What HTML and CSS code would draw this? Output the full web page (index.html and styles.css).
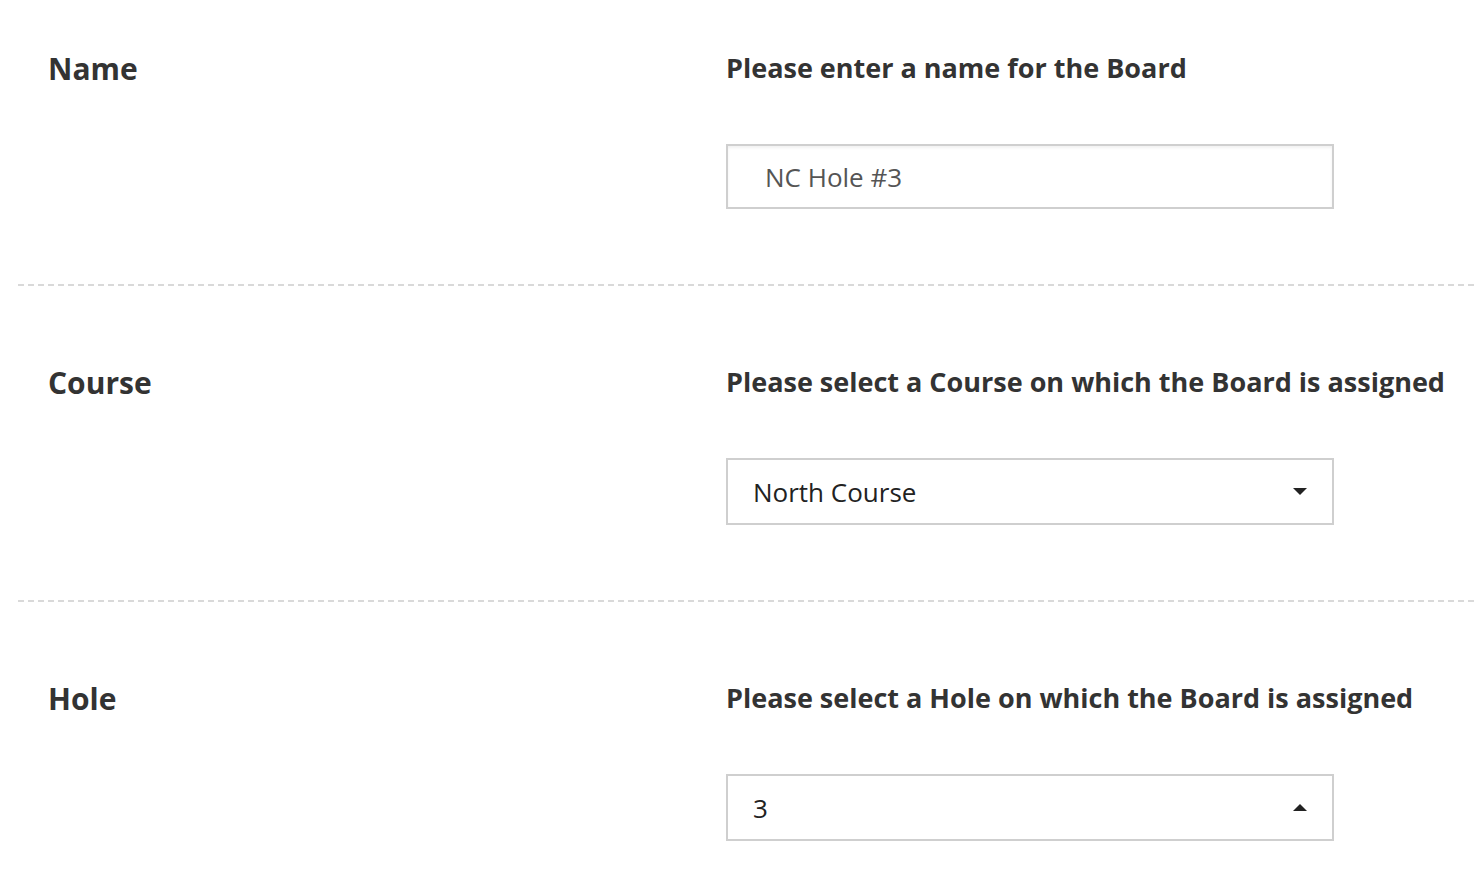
FILE: index.html
```html
<!DOCTYPE html>
<html lang="en">
<head>
<meta charset="UTF-8">
<meta name="viewport" content="width=device-width, initial-scale=1.0">
<title>Board</title>
<link rel="stylesheet" href="styles.css">
</head>
<body>

<!-- Board settings form -->
<form class="board-form">
    <div class="form-row">
        <label class="row-label" for="boardName">Name</label>
        <div class="row-field">
            <p class="row-help">Please enter a name for the Board</p>
            <input type="text" id="boardName" class="text-input" value="NC Hole #3">
        </div>
    </div>

    <div class="form-row">
        <label class="row-label" for="boardCourse">Course</label>
        <div class="row-field">
            <p class="row-help">Please select a Course on which the Board is assigned</p>
            <div class="select-box" id="boardCourse">
                <span>North Course</span>
                <span class="caret caret-down"></span>
            </div>
        </div>
    </div>

    <div class="form-row">
        <label class="row-label" for="boardHole">Hole</label>
        <div class="row-field">
            <p class="row-help">Please select a Hole on which the Board is assigned</p>
            <div class="select-box" id="boardHole">
                <span>3</span>
                <span class="caret caret-up"></span>
            </div>
        </div>
    </div>
</form>

</body>
</html>
```

FILE: styles.css
```css
body {
    margin: 0;
    background: #fff;
    font-family: "Open Sans", "Lato", sans-serif;
    color: #333;
}

/* Filas del formulario */
.board-form {
    padding-left: 18px;
}

.form-row {
    display: grid;
    grid-template-columns: 708px 1fr;
    padding: 80px 0 77px 0;
    background-image: repeating-linear-gradient(to right, #d9d9d9 0, #d9d9d9 6px, transparent 6px, transparent 10px);
    background-size: 100% 2px;
    background-repeat: no-repeat;
    background-position: left bottom;
}

.form-row:first-child {
    padding-top: 52px;
}

.form-row:last-child {
    background-image: none;
}

.row-label {
    padding-left: 30px;
    font-size: 30px;
    font-weight: 700;
    line-height: 34px;
    color: #333;
}

.row-help {
    margin: 0 0 60px 0;
    font-size: 27px;
    font-weight: 700;
    line-height: 32px;
    color: #333;
    white-space: nowrap;
}

/* Campo de texto */
.text-input {
    display: block;
    box-sizing: border-box;
    width: 608px;
    height: 65px;
    padding: 0 0 0 37px;
    border: 2px solid #cfcfcf;
    box-shadow: inset 0 2px 3px rgba(0, 0, 0, 0.06);
    font-family: inherit;
    font-size: 26px;
    color: #555;
    outline: none;
}

/* Selectores */
.select-box {
    box-sizing: border-box;
    width: 608px;
    height: 67px;
    padding: 0 25px 0 25px;
    border: 2px solid #cfcfcf;
    display: flex;
    align-items: center;
    justify-content: space-between;
    font-size: 26px;
    color: #222;
}

.caret {
    width: 0;
    height: 0;
    border-left: 7px solid transparent;
    border-right: 7px solid transparent;
}

.caret-down {
    border-top: 7px solid #222;
}

.caret-up {
    border-bottom: 7px solid #222;
}
```
